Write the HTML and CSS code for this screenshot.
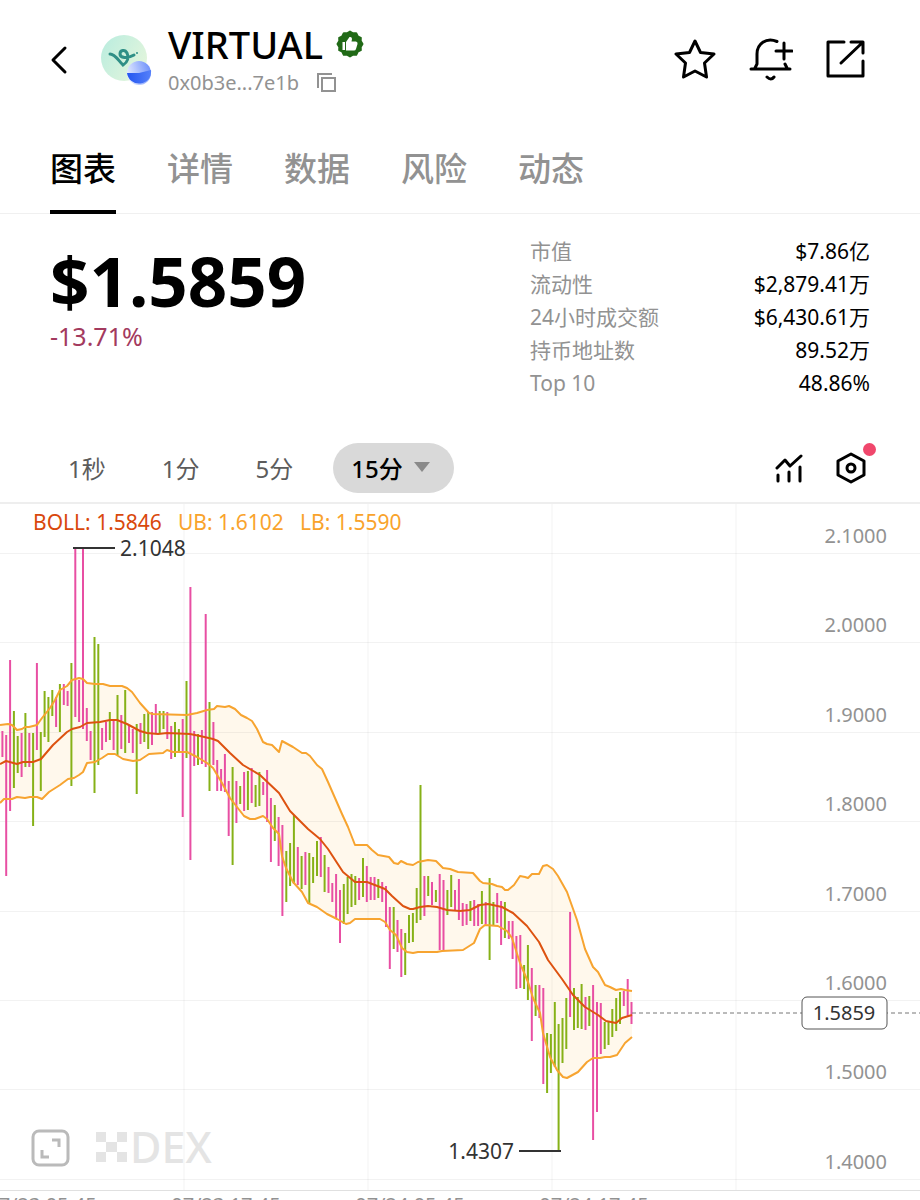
FILE: index.html
```html
<!DOCTYPE html>
<html lang="zh-CN">
<head>
    <meta charset="UTF-8">
    <meta name="viewport" content="width=device-width, initial-scale=1">
    <title>VIRTUAL</title>
    <link rel="stylesheet" href="styles.css">
</head>
<body>
<header class="header">
    <button type="button" class="icon-btn back" aria-label="返回">
        <svg width="20" height="30" viewBox="0 0 20 30"><path d="M16 3L4 15L16 27"/></svg>
    </button>
    <svg class="logo" width="52" height="52" viewBox="0 0 52 52">
        <defs>
            <linearGradient id="mint" x1="0" y1="0" x2="1" y2="0.6">
                <stop offset="0" stop-color="#b8ecdf"/>
                <stop offset="1" stop-color="#e2f5dc"/>
            </linearGradient>
            <linearGradient id="blueTop" x1="0" y1="0.6" x2="1" y2="0.3">
                <stop offset="0" stop-color="#e6ecff"/>
                <stop offset="1" stop-color="#6d90fb"/>
            </linearGradient>
            <linearGradient id="blueBottom" x1="0" y1="0" x2="1" y2="0">
                <stop offset="0" stop-color="#2456f0"/>
                <stop offset="1" stop-color="#5580fa"/>
            </linearGradient>
        </defs>
        <circle cx="24" cy="24" r="23" fill="url(#mint)"/>
        <path class="logo-mark" d="M10 20C15 20 18 26 23 31C28 28 29 23 27 19C25 15 20 16 20 20C20 24 27 25 34 21"/>
        <circle cx="37" cy="19" r="1" fill="#2f8f86"/>
        <circle cx="39" cy="39" r="12" fill="url(#blueTop)"/>
        <path d="M27 39H39L51 36A12 12 0 0 1 27 39Z" fill="url(#blueBottom)"/>
    </svg>
    <div class="token">
        <div class="token-row">
            <h1>VIRTUAL</h1>
            <svg width="28" height="28" viewBox="0 0 28 28">
                <path fill="#216a17" stroke="#216a17" stroke-width="2" stroke-linejoin="round" d="M14 1.500L17 3.300L20.200 3.200L21.700 6.300L24.800 7.800L24.700 11L26.500 14L24.700 17L24.800 20.200L21.700 21.700L20.200 24.800L17 24.700L14 26.500L11 24.700L7.800 24.800L6.300 21.700L3.200 20.200L3.300 17L1.500 14L3.300 11L3.200 7.800L6.300 6.300L7.800 3.200L11 3.300Z"/>
                <path fill="#fff" d="M6.500 12H9V20H6.500ZM10 12L13.500 7Q16 6.500 16 9L15.500 11.500H20Q22 12 21.500 14L20 19Q19.500 20.500 18 20.500H10Z"/>
            </svg>
        </div>
        <div class="token-row address">
            <span>0x0b3e...7e1b</span>
            <button type="button" class="icon-btn copy" aria-label="复制">
                <svg width="20" height="20" viewBox="0 0 20 20"><path d="M5 5H18V18H5ZM1 15V1H15"/></svg>
            </button>
        </div>
    </div>
    <div class="actions">
        <button type="button" class="icon-btn" aria-label="收藏">
            <svg width="42" height="42" viewBox="0 0 42 42"><path d="M21 3L26.500 14.500L40 16L30.500 25L32.500 39L21 33L9.500 39L11.500 25L2 16L15.500 14.500Z"/></svg>
        </button>
        <button type="button" class="icon-btn" aria-label="提醒">
            <svg width="44" height="44" viewBox="0 0 44 44"><path d="M28 4.500C17 0 8 7 8 17V27L6 31M2 32H41M36 27L38 31M27 14H43M35 6V22M18 40Q22 44 25 40"/></svg>
        </button>
        <button type="button" class="icon-btn" aria-label="分享">
            <svg width="40" height="40" viewBox="0 0 40 40"><path d="M18 3H2V37H37V22M25 3H37V14M36 4L15 24"/></svg>
        </button>
    </div>
</header>

<nav class="tabs">
    <a href="#chart" class="active">图表</a>
    <a href="#detail">详情</a>
    <a href="#data">数据</a>
    <a href="#risk">风险</a>
    <a href="#feed">动态</a>
</nav>

<section class="summary">
    <div>
        <div class="price">$1.5859</div>
        <div class="change">-13.71%</div>
    </div>
    <dl class="stats">
        <div><dt>市值</dt><dd>$7.86亿</dd></div>
        <div><dt>流动性</dt><dd>$2,879.41万</dd></div>
        <div><dt>24小时成交额</dt><dd>$6,430.61万</dd></div>
        <div><dt>持币地址数</dt><dd>89.52万</dd></div>
        <div><dt>Top 10</dt><dd>48.86%</dd></div>
    </dl>
</section>

<div class="toolbar">
    <button type="button" class="period">1秒</button>
    <button type="button" class="period">1分</button>
    <button type="button" class="period">5分</button>
    <button type="button" class="period selected">15分
        <svg width="16" height="10" viewBox="0 0 16 10"><path d="M0 0H16L8 10Z"/></svg>
    </button>
    <div class="tools">
        <button type="button" class="icon-btn" aria-label="指标">
            <svg width="28" height="30" viewBox="0 0 28 30"><path d="M2 15L10 7L15 13L26 3M3 22V28M14 19V28M25 14V28"/></svg>
        </button>
        <button type="button" class="icon-btn settings" aria-label="设置">
            <svg width="30" height="32" viewBox="0 0 30 32"><path d="M15 2L28 9V23L15 30L2 23V9Z"/><circle cx="15" cy="16" r="4"/></svg>
            <span class="dot"></span>
        </button>
    </div>
</div>

<svg class="chart" id="chart" viewBox="0 0 920 720">
    <path id="band"/>
    <g id="grid"></g>
    <g class="watermark">
        <path d="M96 628h10v10h-10zM117 628h10v10h-10zM106 638h11v10h-11zM96 648h10v10h-10zM117 648h10v10h-10z"/>
        <text x="130" y="659">DEX</text>
    </g>
    <g class="expand">
        <rect x="33" y="627" width="35" height="34" rx="6"/>
        <path d="M52 636H59V643M42 646V653H49"/>
    </g>
    <g id="candles"></g>
    <path id="upper" class="edge"/>
    <path id="lower" class="edge"/>
    <path id="middle"/>
    <g class="marker">
        <path d="M73 44H115M519 647H561"/>
        <text x="120" y="52">2.1048</text>
        <text x="514" y="655" text-anchor="end">1.4307</text>
    </g>
    <g class="legend">
        <text class="boll" x="33" y="26">BOLL: 1.5846</text>
        <text x="178" y="26">UB: 1.6102</text>
        <text x="300" y="26">LB: 1.5590</text>
    </g>
    <g id="axis"></g>
    <g class="last">
        <path d="M632 509H920"/>
        <rect x="802" y="493" width="85" height="32" rx="5"/>
        <text x="844" y="516" text-anchor="middle">1.5859</text>
    </g>
</svg>

<script>
    // top-bottom of every 15m bar, g = up, r = down
    const bars = `
        r227-253 r231-372 r156-307 g207-284 g232-269 r229-273 g209-263 r229-263 g229-322 r159-246
        g228-287 g187-233 g193-238 g186-212 r193-223 g180-228 r180-201 r187-202 g159-282 r44-213
        r176-218 r44-225 r204-237 r227-256 g133-289 g140-261 r224-246 r218-238 g208-236 r216-246
        g191-251 r211-245 g186-249 r221-239 r225-249 g220-290 r219-240 g210-238 g208-245 r208-241
        r200-229 g207-230 g207-225 r208-235 r222-255 g218-253 g225-249 r215-313 g177-254 r83-356
        r227-262 g230-261 r226-260 r110-263 g198-287 r218-261 r256-287 r265-287 r250-288 r277-332
        g263-361 r277-319 g282-300 r268-307 g267-306 r264-299 g281-303 g268-302 r278-291 r266-318
        r294-358 g301-337 r313-362 r321-412 g347-398 g339-382 g311-380 r343-381 g352-385 r348-381
        g349-399 g353-379 g337-372 r333-373 g351-388 r363-389 r379-398 r370-415 r386-439 g380-420
        g373-410 g370-403 g372-401 r374-396 g354-393 r362-398 r373-396 r373-396 g375-394 r378-398
        r382-423 r403-465 g403-445 r416-448 r425-473 g429-471 g411-439 g409-438 g384-419 g281-416
        r372-412 g372-392 r378-401 g386-398 r370-446 r376-447 g386-411 g371-403 r386-406 r375-416
        r399-422 r400-421 g397-417 r396-422 r400-422 g387-420 r398-420 g374-456 g398-422 r389-419
        r397-441 g398-434 r417-435 r417-455 r432-485 r431-484 g461-485 g441-496 r464-537 g481-512
        r481-514 r484-580 g529-589 g530-569 g498-563 g520-646 g514-559 g494-545 r408-513 g484-526
        g493-524 g480-525 r493-526 g492-522 r481-636 r498-608 r499-550 g518-545 g518-541 g505-533
        g494-527 g488-520 r487-502 r475-512 r498-520`.trim().split(/\s+/);

    const upper = "0,221 8,220 12,221 17,226 22,225 25,223 29,223 37,221 42,214 50,204 55,196 60,186 67,182 72,176 79,174 83,175 87,179 95,180 103,180 110,182 122,182 127,184 132,188 140,199 149,209 153,210 187,211 197,209 207,206 214,205 217,202 225,203 229,202 235,205 241,211 247,214 252,217 257,225 263,238 267,240 272,241 279,248 282,237 293,243 302,249 306,249 310,252 317,261 322,265 328,278 335,294 342,310 348,323 355,341 367,341 372,346 378,351 389,353 394,359 398,360 401,357 407,360 413,361 418,358 428,356 436,357 443,364 450,365 458,368 473,369 480,377 483,379 492,380 497,382 502,383 505,386 508,386 514,381 520,372 525,373 528,374 532,370 539,370 543,362 547,361 553,365 558,372 567,388 577,416 585,445 593,463 598,468 605,481 610,483 616,486 621,485 625,486 632,487";
    const middle = "0,260 6,257 17,260 23,258 33,258 41,255 53,241 67,228 72,225 80,223 87,219 100,218 110,216 117,216 127,220 140,227 147,229 158,230 167,229 190,230 200,232 213,235 218,237 230,249 243,261 260,271 279,289 290,307 308,325 320,335 328,345 343,368 355,378 367,378 380,383 385,385 392,392 403,402 410,405 413,405 420,403 428,402 437,403 447,406 460,407 470,406 480,401 488,400 502,403 513,409 527,422 539,438 548,456 562,475 573,491 585,503 598,511 606,517 616,519 622,514 632,511";
    const lower = "0,299 4,295 12,295 17,293 25,294 30,293 37,293 42,295 49,288 60,281 68,275 74,274 79,271 83,268 87,259 95,258 102,254 108,250 115,250 123,255 133,257 140,256 149,250 163,249 167,246 173,248 187,248 197,253 207,259 213,264 222,279 230,294 237,303 244,312 250,315 255,315 263,312 267,315 273,324 279,330 282,352 286,364 293,378 302,388 308,399 317,403 327,410 337,415 346,420 350,419 355,415 380,415 385,418 390,426 396,431 402,444 407,448 413,449 418,448 437,448 442,447 463,446 474,439 480,425 485,421 498,422 507,427 512,434 520,459 528,478 533,494 540,509 543,529 550,553 557,566 563,573 567,574 578,568 587,558 593,554 600,554 605,553 610,553 617,551 625,539 632,533";

    // first bar and distance between bars
    const start = 2.4;
    const step = 3.836;

    let candles = "";
    bars.forEach((bar, i) => {
        const [top, bottom] = bar.slice(1).split("-");
        const x = (start + i * step).toFixed(1);
        candles += `<path class="${bar[0] === "g" ? "up" : "down"}" d="M${x} ${top}V${bottom}"/>`;
    });
    document.getElementById("candles").innerHTML = candles;

    document.getElementById("upper").setAttribute("d", "M" + upper);
    document.getElementById("middle").setAttribute("d", "M" + middle);
    document.getElementById("lower").setAttribute("d", "M" + lower);
    document.getElementById("band").setAttribute("d", "M" + upper + " L" + lower.split(" ").reverse().join(" ") + "Z");

    let grid = '<path class="border" d="M0 686.5H920"/>';
    let axis = "";
    for (let i = 0; i < 8; i++) {
        const y = Math.round(49 + i * 89.4);
        grid += `<path d="M0 ${y + 0.5}H920"/>`;
        axis += `<text x="887" y="${y - 10}" text-anchor="end">${(2.1 - i * 0.1).toFixed(4)}</text>`;
    }
    ["07/23 05:45", "07/23 17:45", "07/24 05:45", "07/24 17:45"].forEach((time, i) => {
        grid += `<path d="M${184 * (i + 1)} 0V686"/>`;
        axis += `<text x="${42 + 184 * i}" y="708" text-anchor="middle">${time}</text>`;
    });
    document.getElementById("grid").innerHTML = grid;
    document.getElementById("axis").innerHTML = axis;
</script>
</body>
</html>
```
FILE: styles.css
```css
* {
    box-sizing: border-box;
}

body {
    margin: 0;
    height: 100vh;
    overflow: hidden;
    background-color: #fff;
    color: #000;
    font-family: "Noto Sans", "Noto Sans CJK SC", sans-serif;
}

button {
    border: none;
    background: none;
    padding: 0;
    color: inherit;
    font-family: inherit;
}

.icon-btn {
    display: flex;
}

.icon-btn svg {
    fill: none;
    stroke: #000;
    stroke-width: 3;
    stroke-linecap: round;
    stroke-linejoin: round;
}

.header {
    display: flex;
    align-items: center;
    height: 122px;
    padding: 0 54px 2px 49px;
}

.logo {
    margin-left: 31px;
}

.logo-mark {
    fill: none;
    stroke: #2f8f86;
    stroke-width: 3;
    stroke-linecap: round;
}

.token {
    margin-left: 16px;
}

.token-row {
    display: flex;
    align-items: center;
    gap: 13px;
}

h1 {
    margin: 0;
    font-size: 38px;
    line-height: 46px;
    font-weight: 500;
}

.address {
    gap: 18px;
    font-size: 20px;
    line-height: 32px;
    color: #929292;
}

.copy svg {
    stroke: #929292;
    stroke-width: 2;
    stroke-linecap: butt;
    stroke-linejoin: miter;
}

.actions {
    display: flex;
    align-items: center;
    gap: 33px;
    margin-left: auto;
    padding-bottom: 2px;
}

.tabs {
    display: flex;
    gap: 51px;
    height: 92px;
    padding: 0 50px;
    border-bottom: 1px solid #f0f0f0;
}

.tabs a {
    height: 92px;
    font-size: 33px;
    line-height: 94px;
    font-weight: 500;
    color: #929292;
    text-decoration: none;
}

.tabs .active {
    color: #000;
    border-bottom: 4px solid #000;
}

.summary {
    display: flex;
    justify-content: space-between;
    height: 220px;
    padding: 20px 50px 0;
}

.price {
    margin-top: 6px;
    font-size: 69px;
    line-height: 80px;
    font-weight: 700;
}

.change {
    font-size: 25px;
    line-height: 32px;
    color: #a33a5e;
}

.stats {
    width: 340px;
    margin: 1px 0 0;
    font-size: 21px;
    line-height: 33px;
}

.stats div {
    display: flex;
    justify-content: space-between;
}

.stats dt {
    color: #929292;
}

.stats dd {
    margin: 0;
}

.toolbar {
    display: flex;
    align-items: center;
    gap: 20px;
    height: 70px;
    padding: 0 54px 0 50px;
    border-bottom: 2px solid #eee;
}

.period {
    display: flex;
    align-items: center;
    gap: 11px;
    height: 50px;
    padding: 0 18px 2px;
    border-radius: 25px;
    font-size: 24px;
    color: #5c5c5c;
}

.selected {
    margin-left: 2px;
    padding-right: 24px;
    background-color: #d9d9d9;
    color: #000;
    font-weight: 500;
}

.selected svg {
    fill: #8a8a8a;
}

.tools {
    display: flex;
    align-items: center;
    gap: 33px;
    margin-left: auto;
}

.settings {
    position: relative;
}

.dot {
    position: absolute;
    top: -9px;
    right: -10px;
    width: 13px;
    height: 13px;
    border-radius: 50%;
    background-color: #f0476c;
}

.chart {
    display: block;
    width: 100%;
    font-size: 20px;
}

#grid path {
    stroke: #000;
    stroke-opacity: 0.05;
}

#grid .border {
    stroke-opacity: 0.12;
}

.watermark {
    fill: #e4e4e4;
}

.watermark text {
    font-size: 43px;
    font-weight: 500;
}

.expand {
    fill: none;
    stroke: #bababa;
    stroke-width: 3;
}

#band {
    fill: #fff8ec;
}

#candles path {
    stroke-width: 2;
}

#candles .up {
    stroke: #86b117;
}

#candles .down {
    stroke: #e84fa3;
}

.edge {
    fill: none;
    stroke: #f7a430;
    stroke-width: 2;
    stroke-linejoin: round;
}

#middle {
    fill: none;
    stroke: #dd5210;
    stroke-width: 2;
    stroke-linejoin: round;
}

.marker path {
    stroke: #333;
    stroke-width: 2;
}

.marker text,
.legend text {
    font-size: 21px;
}

.marker text,
.last text {
    fill: #333;
}

.legend {
    fill: #f9a32c;
}

.legend .boll {
    fill: #d9480c;
}

#axis {
    fill: #929292;
}

.last path {
    stroke: #777;
    stroke-dasharray: 4 3;
}

.last rect {
    fill: #fff;
    stroke: #555;
}
```
